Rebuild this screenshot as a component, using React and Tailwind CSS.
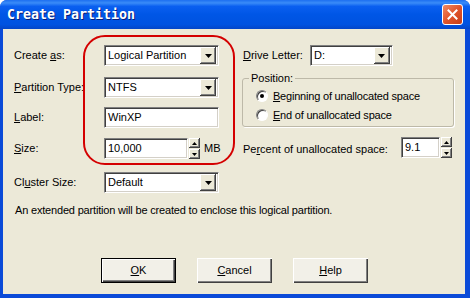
import React from "react";

const sunken =
  "bg-white border border-t-[#808080] border-l-[#808080] border-r-[#ffffff] border-b-[#ffffff] shadow-[inset_1px_1px_0_#404040,inset_-1px_-1px_0_#d4d0c8]";

function DownBtn() {
  return (
    <div className="w-[16px] h-[17px] mr-[2px] flex items-center justify-center bg-[#ece9d8] shadow-[inset_-1px_-1px_0_#404040,inset_1px_1px_0_#ffffff,inset_-2px_-2px_0_#808080]">
      <svg width="7" height="4" viewBox="0 0 7 4">
        <path d="M0 0H7L3.5 4Z" fill="#000" />
      </svg>
    </div>
  );
}

function Combo({ w, text }) {
  return (
    <div className={`${sunken} ${w} h-[21px] flex items-center justify-between`}>
      <span className="pl-[3px]">{text}</span>
      <DownBtn />
    </div>
  );
}

function Spin() {
  const half =
    "h-[10px] w-[11px] flex items-center justify-center bg-[#ece9d8] shadow-[inset_-1px_-1px_0_#404040,inset_1px_1px_0_#ffffff,inset_-2px_-2px_0_#808080]";
  return (
    <div className="flex flex-col gap-[1px] ml-[1px]">
      <div className={half}>
        <svg width="5" height="3" viewBox="0 0 5 3">
          <path d="M0 3H5L2.5 0Z" fill="#000" />
        </svg>
      </div>
      <div className={half}>
        <svg width="5" height="3" viewBox="0 0 5 3">
          <path d="M0 0H5L2.5 3Z" fill="#000" />
        </svg>
      </div>
    </div>
  );
}

function Radio({ checked }) {
  return (
    <div className="w-[12px] h-[12px] rounded-full bg-white border border-t-[#808080] border-l-[#808080] border-r-[#ffffff] border-b-[#ffffff] shadow-[inset_1px_1px_0_#404040] flex items-center justify-center">
      {checked && <div className="w-[4px] h-[4px] rounded-full bg-black" />}
    </div>
  );
}

function Button({ children, isDefault }) {
  return (
    <div
      className={`w-[75px] h-[25px] flex items-center justify-center bg-[#f2f0e8] ${
        isDefault
          ? "border border-black shadow-[inset_1px_1px_0_#ffffff,inset_-1px_-1px_0_#404040,inset_-2px_-2px_0_#808080]"
          : "shadow-[inset_1px_1px_0_#ffffff,inset_-1px_-1px_0_#404040,inset_-2px_-2px_0_#808080]"
      }`}
    >
      {children}
    </div>
  );
}

export default function App() {
  return (
    <div className="w-[470px] h-[298px] flex flex-col bg-[#0a4ad8] rounded-t-[7px] overflow-hidden font-['Liberation_Sans',Arial,sans-serif] text-[11px] leading-[13px] text-black">
      {/* Title bar */}
      <div className="h-[29px] shrink-0 flex items-center justify-between pl-[7px] pr-[7px] bg-[linear-gradient(180deg,#1d6ff0_0%,#3a8cf8_10%,#0a5ff0_22%,#0056e6_50%,#0052e0_85%,#0445c8_100%)]">
        <span className="font-['DejaVu_Sans_Mono',monospace] font-bold text-[13.3px] text-white [text-shadow:1px_1px_0_#0a1e78]">
          Create Partition
        </span>
        <div className="w-[21px] h-[21px] rounded-[3px] border border-white flex items-center justify-center bg-[linear-gradient(135deg,#f08a64_0%,#e0542b_50%,#c63d17_100%)]">
          <svg width="11" height="11" viewBox="0 0 11 11">
            <path d="M1.5 1.5L9.5 9.5M9.5 1.5L1.5 9.5" stroke="#fff" strokeWidth="2" strokeLinecap="square" />
          </svg>
        </div>
      </div>

      {/* Body */}
      <div className="flex-1 ml-[3px] mr-[5px] mb-[4px] bg-[#ece9d8] flex flex-col px-[11px]">
        <div className="flex">
          {/* Left column */}
          <div className="relative w-[221px] pt-[16px] flex flex-col">
            <div className="flex items-center h-[21px]">
              <span className="w-[90px]">
                Create <u>a</u>s:
              </span>
              <Combo w="w-[115px]" text="Logical Partition" />
            </div>
            <div className="flex items-center h-[21px] mt-[11px]">
              <span className="w-[90px]">
                <u>P</u>artition Type:
              </span>
              <Combo w="w-[115px]" text="NTFS" />
            </div>
            <div className="flex items-center h-[21px] mt-[9px]">
              <span className="w-[90px]">
                <u>L</u>abel:
              </span>
              <div className={`${sunken} w-[115px] h-[21px] flex items-center`}>
                <span className="pl-[3px]">WinXP</span>
              </div>
            </div>
            <div className="flex items-center h-[21px] mt-[10px]">
              <span className="w-[90px]">
                <u>S</u>ize:
              </span>
              <div className={`${sunken} w-[84px] h-[21px] flex items-center`}>
                <span className="pl-[3px]">10,000</span>
              </div>
              <Spin />
              <span className="ml-[4px]">MB</span>
            </div>
            <div className="flex items-center h-[21px] mt-[13px]">
              <span className="w-[90px]">
                Cl<u>u</u>ster Size:
              </span>
              <Combo w="w-[115px]" text="Default" />
            </div>

            {/* red annotation ring */}
            <div className="absolute left-[69px] top-[6px] w-[152px] h-[130px] rounded-[22px] border-2 border-[#d40000] pointer-events-none" />
          </div>

          {/* Right column */}
          <div className="ml-[9px] w-[214px] pt-[16px] flex flex-col">
            <div className="flex items-center h-[21px]">
              <span className="w-[68px] pl-[1px]">
                <u>D</u>rive Letter:
              </span>
              <Combo w="w-[83px]" text="D:" />
            </div>
            <fieldset className="mt-[6px] border border-[#bdb9a8] rounded-[3px] shadow-[1px_1px_0_#ffffff] pb-[3px]">
              <legend className="ml-[6px] px-[2px]">Position:</legend>
              <div className="flex items-center h-[16px] mt-[3px] pl-[13px]">
                <Radio checked />
                <span className="ml-[5px] tracking-[-0.2px]">
                  <u>B</u>eginning of unallocated space
                </span>
              </div>
              <div className="flex items-center h-[16px] mt-[3px] pl-[13px]">
                <Radio />
                <span className="ml-[5px] tracking-[-0.2px]">
                  <u>E</u>nd of unallocated space
                </span>
              </div>
            </fieldset>
            <div className="flex items-center h-[21px] mt-[10px]">
              <span className="w-[159px] pl-[1px] pt-[3px]">
                Pe<u>r</u>cent of unallocated space:
              </span>
              <div className={`${sunken} w-[39px] h-[21px] flex items-center`}>
                <span className="pl-[3px]">9.1</span>
              </div>
              <Spin />
            </div>
          </div>
        </div>

        <div className="mt-[11px] pl-[1px] tracking-[-0.18px]">
          An extended partition will be created to enclose this logical partition.
        </div>

        <div className="mt-[41px] flex gap-[21px] pl-[87px]">
          <Button isDefault>
            <span>
              <u>O</u>K
            </span>
          </Button>
          <Button>
            <span>
              <u>C</u>ancel
            </span>
          </Button>
          <Button>
            <span>
              <u>H</u>elp
            </span>
          </Button>
        </div>
      </div>
    </div>
  );
}
